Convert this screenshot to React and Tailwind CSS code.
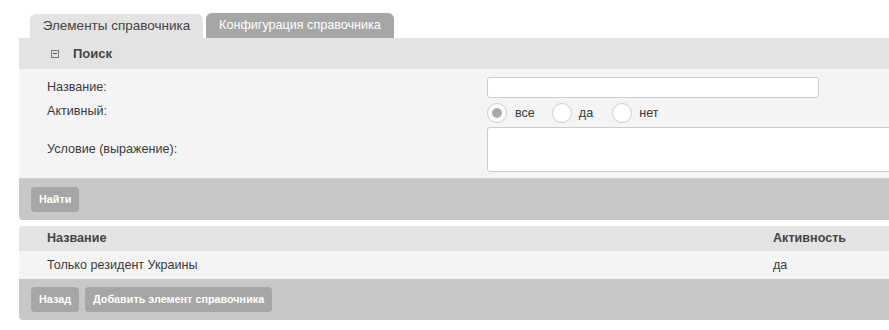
export default function App() {
  const font = { fontFamily: '"Liberation Sans", Arial, sans-serif' };
  return (
    <div className="w-[889px] h-[330px] overflow-hidden bg-white text-[#3a3a3a]" style={font}>
      <div className="pl-[19px] pt-[13px] w-[910px]">
        {/* Tabs */}
        <div className="flex items-end pl-[11px] gap-[3px] h-[25px]">
          <div className="h-[24px] w-[173px] rounded-t-[6px] bg-[#e3e3e3] flex items-center justify-center text-[13.5px] text-[#444]">
            Элементы справочника
          </div>
          <div className="h-[25px] w-[188px] rounded-t-[6px] bg-[#a6a6a6] flex items-center justify-center text-[12.6px] text-white">
            Конфигурация справочника
          </div>
        </div>
        {/* Search panel */}
        <div className="rounded-b-[4px] overflow-hidden">
          <div className="h-[31px] bg-[#e3e3e3] flex items-center pl-[32px]">
            <span className="w-[8px] h-[8px] border border-[#777] flex items-center justify-center mr-[14px]">
              <span className="w-[4px] h-px bg-[#555]"></span>
            </span>
            <span className="text-[13px] font-bold text-[#444]">Поиск</span>
          </div>
          <div className="bg-[#f4f4f4] h-[110px] border-b border-[#cfcfcf] pt-[8px] text-[12.6px]">
            <div className="flex items-center h-[21px]">
              <div className="w-[468px] pl-[28px]">Название:</div>
              <div className="w-[332px] h-[21px] bg-white border border-[#ccc] rounded-[3px]"></div>
            </div>
            <div className="flex items-center h-[20px] mt-[5px]">
              <div className="w-[468px] pl-[28px] relative top-[-2px]">Активный:</div>
              <div className="flex items-center">
                <span className="w-[20px] h-[20px] rounded-full bg-white border border-[#ccc] flex items-center justify-center">
                  <span className="w-[10px] h-[10px] rounded-full bg-[#a9a9a9]"></span>
                </span>
                <span className="ml-[8px] mr-[17px]">все</span>
                <span className="w-[20px] h-[20px] rounded-full bg-white border border-[#ccc]"></span>
                <span className="ml-[7px] mr-[19px]">да</span>
                <span className="w-[20px] h-[20px] rounded-full bg-white border border-[#ccc]"></span>
                <span className="ml-[7px]">нет</span>
              </div>
            </div>
            <div className="flex items-center h-[45px] mt-[4px]">
              <div className="w-[468px] pl-[28px]">Условие (выражение):</div>
              <div className="w-[420px] h-[45px] bg-white border border-[#ccc] rounded-[3px]"></div>
            </div>
          </div>
          <div className="h-[41px] bg-[#c8c8c8] flex items-center pl-[12px]">
            <button className="h-[25px] px-[8px] rounded-[4px] bg-[#a6a6a6] text-white text-[10.8px] font-bold">Найти</button>
          </div>
        </div>
        {/* Table panel */}
        <div className="mt-[6px] rounded-[4px] overflow-hidden text-[12.6px]">
          <div className="h-[25px] bg-[#e3e3e3] flex items-center font-bold text-[#444] text-[12.6px]">
            <div className="w-[754px] pl-[28px]">Название</div>
            <div>Активность</div>
          </div>
          <div className="h-[28px] bg-[#f4f4f4] flex items-center">
            <div className="w-[754px] pl-[28px]">Только резидент Украины</div>
            <div>да</div>
          </div>
          <div className="h-[41px] bg-[#c8c8c8] flex items-center pl-[12px] gap-[6px]">
            <button className="h-[25px] px-[8px] rounded-[4px] bg-[#a6a6a6] text-white text-[10.8px] font-bold">Назад</button>
            <button className="h-[25px] px-[8px] rounded-[4px] bg-[#a6a6a6] text-white text-[10.8px] font-bold">Добавить элемент справочника</button>
          </div>
        </div>
      </div>
    </div>
  );
}
